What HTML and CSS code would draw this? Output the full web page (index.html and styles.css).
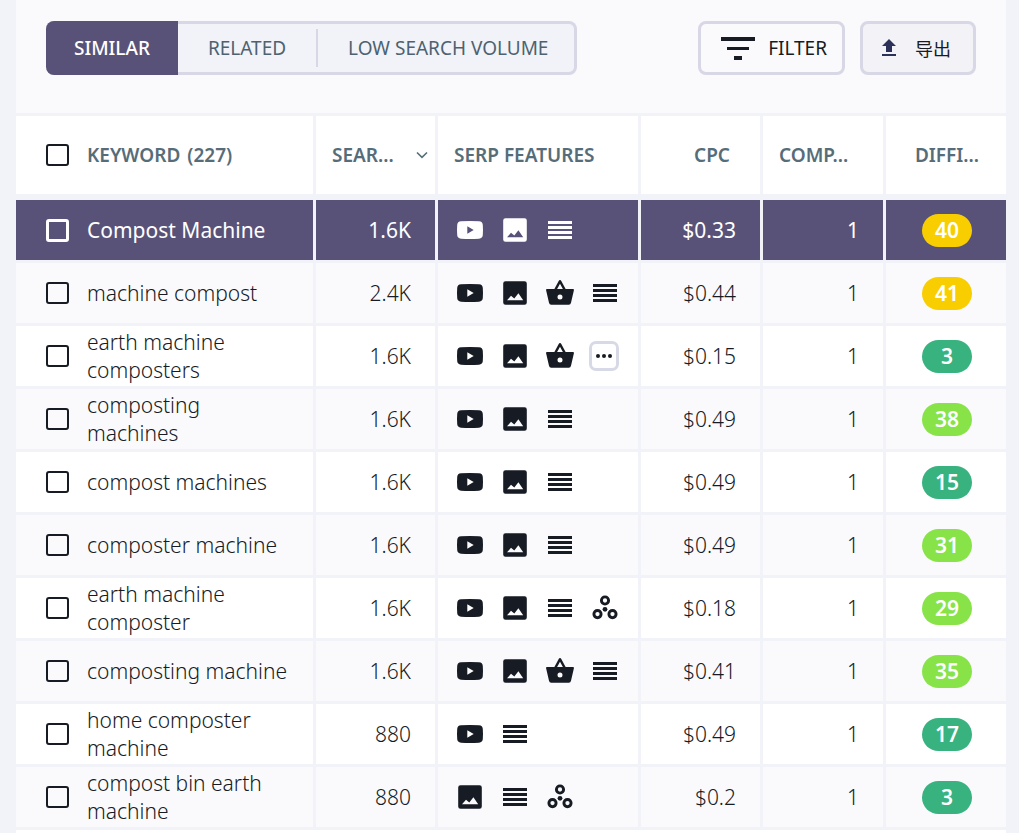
FILE: index.html
```html
<!DOCTYPE html>
<html lang="en">
<head>
<meta charset="utf-8">
<title>Keyword ideas</title>
<link rel="stylesheet" href="styles.css">
</head>
<body>
<svg class="sprite" aria-hidden="true">
  <symbol id="video" viewBox="0 0 28 28"><path fill-rule="evenodd" d="M5 5.300Q14 4.700 23 5.300Q26.600 5.600 26.800 9Q27.200 14 26.800 19Q26.600 22.400 23 22.700Q14 23.300 5 22.700Q1.400 22.400 1.200 19Q.8 14 1.200 9Q1.400 5.600 5 5.300ZM11.300 10.200V17.800L17.700 14Z"/></symbol>
  <symbol id="image" viewBox="0 0 28 28"><path fill-rule="evenodd" d="M4.500 2.300H23.500Q25.800 2.300 25.800 4.600V23.400Q25.800 25.700 23.500 25.700H4.500Q2.200 25.700 2.200 23.400V4.600Q2.200 2.300 4.500 2.300ZM6 21.300H22.200L17.400 14.300L13.300 19.500L10 16.800Z"/></symbol>
  <symbol id="lines" viewBox="0 0 28 28"><path d="M2 5H26V8H2ZM2 10H26V13H2ZM2 15H26V18H2ZM2 20H26V23H2Z"/></symbol>
  <symbol id="basket" viewBox="0 0 28 28"><path fill-rule="evenodd" d="M14 1Q14.800 1 15.300 2L19.600 10H27Q28.200 10 27.900 11.200L25 23.800Q24.600 25.700 22.800 25.700H5.200Q3.400 25.700 3 23.800L.1 11.200Q-.2 10 1 10H8.400L12.700 2Q13.200 1 14 1ZM14 4.800L11.100 10H16.900ZM14 15.500A2.500 2.500 0 1 0 14 20.500A2.500 2.500 0 1 0 14 15.500Z"/></symbol>
  <symbol id="cluster" viewBox="0 0 28 28"><g fill="none" stroke="currentColor" stroke-width="2.900"><circle cx="14" cy="6.500" r="3.600"/><circle cx="6.500" cy="20.100" r="3.600"/><circle cx="21.500" cy="20.100" r="3.600"/></g><circle cx="14" cy="15.300" r="2.400"/></symbol>
</svg>
<main class="panel">
  <div class="toolbar">
    <div class="tabs">
      <button class="tab active">SIMILAR</button>
      <button class="tab">RELATED</button>
      <span class="divider"></span>
      <button class="tab wide">LOW SEARCH VOLUME</button>
    </div>
    <div class="actions">
      <button class="action filter"><svg width="34" height="24" viewBox="0 0 34 24"><path d="M0 1H34V5H0ZM6 11H28V14H6ZM13 20H21V24H13Z"/></svg>FILTER</button>
      <button class="action export"><svg width="16" height="18" viewBox="0 0 16 18"><path d="M8 0L15 7H11V13H5V7H1ZM1 15H15V17H1Z"/></svg>导出</button>
    </div>
  </div>
  <table class="keywords">
    <colgroup><col><col class="c-volume"><col class="c-serp"><col class="c-cpc"><col class="c-comp"><col class="c-diff"></colgroup>
    <thead>
      <tr>
        <th><label class="pick"><input type="checkbox"><span>KEYWORD <span class="count">(227)</span></span></label></th>
        <th><button class="sort">SEAR...<svg width="12" height="8" viewBox="0 0 12 8"><path d="M1 1.500L6 6.300L11 1.500" fill="none" stroke="currentColor" stroke-width="1.600"/></svg></button></th>
        <th>SERP FEATURES</th>
        <th class="right">CPC</th>
        <th>COMP...</th>
        <th class="center">DIFFI...</th>
      </tr>
    </thead>
    <tbody>
      <tr class="main"><td><label class="pick"><input type="checkbox"><span>Compost Machine</span></label></td><td class="num">1.6K</td><td><div class="icons"><svg><use href="#video"/></svg><svg><use href="#image"/></svg><svg><use href="#lines"/></svg></div></td><td class="num">$0.33</td><td class="num">1</td><td class="center"><span class="badge yellow">40</span></td></tr>
      <tr><td><label class="pick"><input type="checkbox"><span>machine compost</span></label></td><td class="num">2.4K</td><td><div class="icons"><svg><use href="#video"/></svg><svg><use href="#image"/></svg><svg><use href="#basket"/></svg><svg><use href="#lines"/></svg></div></td><td class="num">$0.44</td><td class="num">1</td><td class="center"><span class="badge yellow">41</span></td></tr>
      <tr><td><label class="pick"><input type="checkbox"><span>earth machine composters</span></label></td><td class="num">1.6K</td><td><div class="icons"><svg><use href="#video"/></svg><svg><use href="#image"/></svg><svg><use href="#basket"/></svg><button class="more" aria-label="More"><svg viewBox="0 0 24 24"><circle cx="6" cy="12" r="2"/><circle cx="12" cy="12" r="2"/><circle cx="18" cy="12" r="2"/></svg></button></div></td><td class="num">$0.15</td><td class="num">1</td><td class="center"><span class="badge green">3</span></td></tr>
      <tr><td><label class="pick"><input type="checkbox"><span>composting machines</span></label></td><td class="num">1.6K</td><td><div class="icons"><svg><use href="#video"/></svg><svg><use href="#image"/></svg><svg><use href="#lines"/></svg></div></td><td class="num">$0.49</td><td class="num">1</td><td class="center"><span class="badge lime">38</span></td></tr>
      <tr><td><label class="pick"><input type="checkbox"><span>compost machines</span></label></td><td class="num">1.6K</td><td><div class="icons"><svg><use href="#video"/></svg><svg><use href="#image"/></svg><svg><use href="#lines"/></svg></div></td><td class="num">$0.49</td><td class="num">1</td><td class="center"><span class="badge green">15</span></td></tr>
      <tr><td><label class="pick"><input type="checkbox"><span>composter machine</span></label></td><td class="num">1.6K</td><td><div class="icons"><svg><use href="#video"/></svg><svg><use href="#image"/></svg><svg><use href="#lines"/></svg></div></td><td class="num">$0.49</td><td class="num">1</td><td class="center"><span class="badge lime">31</span></td></tr>
      <tr><td><label class="pick"><input type="checkbox"><span>earth machine composter</span></label></td><td class="num">1.6K</td><td><div class="icons"><svg><use href="#video"/></svg><svg><use href="#image"/></svg><svg><use href="#lines"/></svg><svg><use href="#cluster"/></svg></div></td><td class="num">$0.18</td><td class="num">1</td><td class="center"><span class="badge lime">29</span></td></tr>
      <tr><td><label class="pick"><input type="checkbox"><span>composting machine</span></label></td><td class="num">1.6K</td><td><div class="icons"><svg><use href="#video"/></svg><svg><use href="#image"/></svg><svg><use href="#basket"/></svg><svg><use href="#lines"/></svg></div></td><td class="num">$0.41</td><td class="num">1</td><td class="center"><span class="badge lime">35</span></td></tr>
      <tr><td><label class="pick"><input type="checkbox"><span>home composter machine</span></label></td><td class="num">880</td><td><div class="icons"><svg><use href="#video"/></svg><svg><use href="#lines"/></svg></div></td><td class="num">$0.49</td><td class="num">1</td><td class="center"><span class="badge green">17</span></td></tr>
      <tr><td><label class="pick"><input type="checkbox"><span>compost bin earth machine</span></label></td><td class="num">880</td><td><div class="icons"><svg><use href="#image"/></svg><svg><use href="#lines"/></svg><svg><use href="#cluster"/></svg></div></td><td class="num">$0.2</td><td class="num">1</td><td class="center"><span class="badge green">3</span></td></tr>
    </tbody>
  </table>
</main>
</body>
</html>
```
FILE: styles.css
```css
* { box-sizing: border-box; }
body {
  margin: 0;
  background: #f2f3f8;
  color: #171b24;
  font: 300 21px/28px "Noto Sans", "Noto Sans CJK SC", sans-serif;
}
.sprite { display: none; }
svg { fill: currentColor; flex: none; }
button { font: inherit; color: inherit; cursor: pointer; }
.panel { margin: 0 13px 0 16px; background: #fff; padding-bottom: 3px; }
.toolbar {
  display: flex;
  justify-content: space-between;
  padding: 21px 30px 38px;
  background: #fafafc;
}
.tabs {
  display: flex;
  align-items: center;
  height: 54px;
  border: 3px solid #d7d7e5;
  border-left: 0;
  border-radius: 8px;
  background: #f2f3f8;
}
.tab {
  height: 54px;
  padding: 0 30px;
  border: 0;
  background: none;
  color: #4d6270;
  font-size: 19px;
  font-weight: 400;
}
.tab.wide { padding-right: 26px; }
.tab.active {
  padding: 0 28px;
  background: #595278;
  color: #fff;
  font-weight: 500;
  border-radius: 8px 0 0 8px;
}
.divider { width: 2px; height: 38px; background: #d7d7e5; }
.actions { display: flex; gap: 15px; }
.action {
  display: flex;
  align-items: center;
  height: 54px;
  border: 3px solid #d7d7e5;
  border-radius: 8px;
  font-size: 19px;
  font-weight: 400;
}
.filter { gap: 13px; padding: 0 15px 0 20px; background: #fafafc; }
.export {
  gap: 18px;
  padding: 0 22px 0 18px;
  background: #f3f2f7;
  font-family: "Noto Sans CJK SC", sans-serif;
  font-size: 18px;
  font-weight: 400;
}
.export svg { color: #2c3159; }
.keywords {
  width: 100%;
  table-layout: fixed;
  border-collapse: separate;
  border-spacing: 0;
}
.c-volume, .c-cpc { width: 122px; }
.c-serp { width: 203px; }
.c-comp { width: 123px; }
.c-diff { width: 120px; }
th, td { border: 0 solid #f2f3f8; border-width: 0 3px 3px 0; }
th:last-child, td:last-child { border-right: 0; }
th {
  height: 87px;
  padding: 0 15px 0 16px;
  border-top-width: 3px;
  border-bottom-width: 6px;
  color: #566d79;
  font-size: 19px;
  font-weight: 600;
  text-align: left;
  white-space: nowrap;
}
th:first-child, td:first-child { padding: 0 22px 0 30px; }
th.right { padding-right: 30px; text-align: right; }
th.center, td.center { padding: 0 0 0 2px; text-align: center; }
td { height: 63px; padding: 0 18px; }
td.num { padding: 0 24px 0 0; text-align: right; }
tbody tr:nth-child(even) td { background: #fafafc; }
.main td { background: #595278; color: #fff; font-weight: 400; }
.pick { display: flex; align-items: center; gap: 18px; }
.pick input {
  appearance: none;
  flex: none;
  width: 23px;
  height: 22px;
  margin: 0;
  border: 2px solid #171b24;
  border-radius: 3px;
}
.main .pick input { height: 23px; border: 3px solid #fff; }
.count { margin-left: 2px; }
.sort {
  display: flex;
  align-items: center;
  justify-content: space-between;
  width: 96px;
  padding: 0;
  border: 0;
  background: none;
}
.icons { display: flex; align-items: center; gap: 17px; }
.icons svg { width: 28px; height: 28px; }
.more {
  display: grid;
  place-items: center;
  width: 30px;
  height: 30px;
  margin: 0 -2px;
  padding: 0;
  border: 3px solid #d7d9e6;
  border-radius: 7px;
  background: #fff;
}
.icons .more svg { width: 24px; height: 24px; }
.badge {
  display: block;
  width: 50px;
  margin: 0 auto;
  border-radius: 17px;
  color: #fff;
  font-weight: 600;
  line-height: 33px;
}
.yellow { background: #f8ce00; }
.green { background: #38b27f; }
.lime { background: #88e348; }
```
